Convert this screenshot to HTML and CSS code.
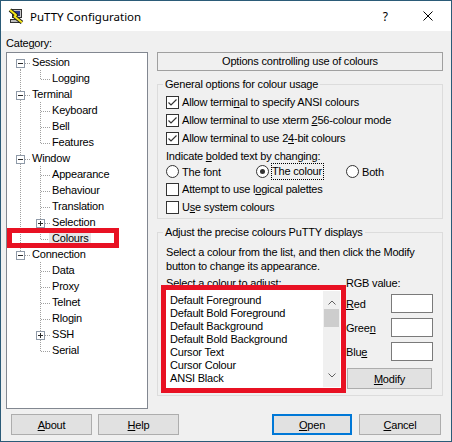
FILE: index.html
```html
<!DOCTYPE html>
<html>
<head>
<meta charset="utf-8">
<title>PuTTY Configuration</title>
<link rel="stylesheet" href="styles.css">
</head>
<body>
<div class="window">
  <div class="titlebar">
    <svg class="app-icon" viewBox="0 0 16 16" width="16" height="16">
      <rect x="4.5" y="1.5" width="9" height="8" fill="#c8c8c8" stroke="#333"/>
      <rect x="6" y="3" width="6" height="5" fill="#2c3a8c"/>
      <rect x="2.5" y="11.5" width="10" height="3" fill="#bdbdbd" stroke="#333"/>
      <polyline points="2,2 8,7 6.5,8.5 14,14.5" fill="none" stroke="#222" stroke-width="4" stroke-linejoin="round"/>
      <polyline points="2,2 8,7 6.5,8.5 14,14.5" fill="none" stroke="#f5e61a" stroke-width="2" stroke-linejoin="round"/>
    </svg>
    <span class="title">PuTTY Configuration</span>
    <span class="help">?</span>
    <svg class="close" viewBox="0 0 10 10" width="10" height="10">
      <path d="M0.5 0.5 L9.5 9.5 M9.5 0.5 L0.5 9.5" stroke="#000" stroke-width="1" fill="none"/>
    </svg>
  </div>

  <div class="main">
    <div class="left">
      <div class="cat">Cate<u>g</u>ory:</div>
      <div class="tree">
        <div class="row"><span class="c1 first"><span class="exp"></span></span><span class="txt">Session</span></div>
        <div class="row"><span class="c1 thru"></span><span class="c2 last"></span><span class="txt">Logging</span></div>
        <div class="row"><span class="c1 tee"><span class="exp"></span></span><span class="txt">Terminal</span></div>
        <div class="row"><span class="c1 thru"></span><span class="c2 tee"></span><span class="txt">Keyboard</span></div>
        <div class="row"><span class="c1 thru"></span><span class="c2 tee"></span><span class="txt">Bell</span></div>
        <div class="row"><span class="c1 thru"></span><span class="c2 last"></span><span class="txt">Features</span></div>
        <div class="row"><span class="c1 tee"><span class="exp"></span></span><span class="txt">Window</span></div>
        <div class="row"><span class="c1 thru"></span><span class="c2 tee"></span><span class="txt">Appearance</span></div>
        <div class="row"><span class="c1 thru"></span><span class="c2 tee"></span><span class="txt">Behaviour</span></div>
        <div class="row"><span class="c1 thru"></span><span class="c2 tee"></span><span class="txt">Translation</span></div>
        <div class="row"><span class="c1 thru"></span><span class="c2 tee"><span class="exp plus"></span></span><span class="txt">Selection</span></div>
        <div class="row"><span class="c1 thru"></span><span class="c2 last"></span><span class="txt sel">Colours</span></div>
        <div class="row"><span class="c1 last"><span class="exp"></span></span><span class="txt">Connection</span></div>
        <div class="row"><span class="c1"></span><span class="c2 tee"></span><span class="txt">Data</span></div>
        <div class="row"><span class="c1"></span><span class="c2 tee"></span><span class="txt">Proxy</span></div>
        <div class="row"><span class="c1"></span><span class="c2 tee"></span><span class="txt">Telnet</span></div>
        <div class="row"><span class="c1"></span><span class="c2 tee"></span><span class="txt">Rlogin</span></div>
        <div class="row"><span class="c1"></span><span class="c2 tee"><span class="exp plus"></span></span><span class="txt">SSH</span></div>
        <div class="row"><span class="c1"></span><span class="c2 last"></span><span class="txt">Serial</span></div>
        <div class="mark"></div>
      </div>
    </div>

    <div class="right">
      <div class="hdr">Options controlling use of colours</div>

      <fieldset class="group g1">
        <legend>General options for colour usage</legend>
        <div class="check"><span class="cb"><svg viewBox="0 0 11 11" width="11" height="11"><polyline points="1.5,5.5 4,8 9.5,2.5" fill="none" stroke="#333" stroke-width="1.2"/></svg></span><span>Allow termi<u>n</u>al to specify ANSI colours</span></div>
        <div class="check"><span class="cb"><svg viewBox="0 0 11 11" width="11" height="11"><polyline points="1.5,5.5 4,8 9.5,2.5" fill="none" stroke="#333" stroke-width="1.2"/></svg></span><span>Allow terminal to use xterm <u>2</u>56-colour mode</span></div>
        <div class="check"><span class="cb"><svg viewBox="0 0 11 11" width="11" height="11"><polyline points="1.5,5.5 4,8 9.5,2.5" fill="none" stroke="#333" stroke-width="1.2"/></svg></span><span>Allow terminal to use 2<u>4</u>-bit colours</span></div>
        <div class="lbl">Indicate <u>b</u>olded text by changing:</div>
        <div class="radios">
          <div class="radio"><span class="rb"></span><span>The font</span></div>
          <div class="radio"><span class="rb on"></span><span class="focus">The colour</span></div>
          <div class="radio"><span class="rb"></span><span>Both</span></div>
        </div>
        <div class="check"><span class="cb"></span><span>Attempt to use l<u>o</u>gical palettes</span></div>
        <div class="check"><span class="cb"></span><span>U<u>s</u>e system colours</span></div>
      </fieldset>

      <fieldset class="group g2">
        <legend>Adjust the precise colours PuTTY displays</legend>
        <p class="desc">Select a colour from the list, and then click the Modify<br>button to change its appearance.</p>
        <div class="adjust">
          <div class="listcol">
            <div class="lbl2">Select a colour to adjust:</div>
            <div class="listbox">
              <ul class="items">
                <li>Default Foreground</li>
                <li>Default Bold Foreground</li>
                <li>Default Background</li>
                <li>Default Bold Background</li>
                <li>Cursor Text</li>
                <li>Cursor Colour</li>
                <li>ANSI Black</li>
              </ul>
              <div class="scrollbar">
                <div class="sb-btn up"><svg viewBox="0 0 8 5" width="8" height="5"><polyline points="0.5,4.5 4,1 7.5,4.5" fill="none" stroke="#606060" stroke-width="1"/></svg></div>
                <div class="thumb"></div>
                <div class="track"></div>
                <div class="sb-btn down"><svg viewBox="0 0 8 5" width="8" height="5"><polyline points="0.5,0.5 4,4 7.5,0.5" fill="none" stroke="#606060" stroke-width="1"/></svg></div>
              </div>
            </div>
          </div>
          <div class="rgb">
            <div class="lbl2">RGB value:</div>
            <div class="rgb-row first"><span><u>R</u>ed</span><span class="tb"></span></div>
            <div class="rgb-row"><span>Gree<u>n</u></span><span class="tb"></span></div>
            <div class="rgb-row"><span>Blu<u>e</u></span><span class="tb"></span></div>
            <div class="btn modify"><span><u>M</u>odify</span></div>
          </div>
        </div>
      </fieldset>
    </div>
  </div>

  <div class="buttons">
    <div class="btn about"><span><u>A</u>bout</span></div>
    <div class="btn helpb"><span><u>H</u>elp</span></div>
    <div class="btn open"><span><u>O</u>pen</span></div>
    <div class="btn cancel"><span><u>C</u>ancel</span></div>
  </div>
</div>
</body>
</html>
```

FILE: styles.css
```css
* { box-sizing: border-box; }
html, body { margin: 0; padding: 0; background: #fff; }

.window {
  width: 452px;
  height: 442px;
  border: 1px solid #2b5b78;
  background: #f0f0f0;
  display: flex;
  flex-direction: column;
  font-family: "Liberation Sans", Arial, sans-serif;
  font-size: 11px;
  letter-spacing: -0.2px;
  color: #000;
  overflow: hidden;
}

/* title bar */
.titlebar {
  height: 30px;
  flex: none;
  background: #fff;
  display: flex;
  align-items: center;
  padding-left: 7px;
}
.app-icon { flex: none; }
.title {
  margin-left: 6px;
  font-family: "Noto Sans", sans-serif;
  font-size: 11.5px;
  letter-spacing: 0;
}
.help {
  margin-left: auto;
  font-family: "Noto Sans", sans-serif;
  font-size: 12px;
  letter-spacing: 0;
}
.close { margin-left: 35px; margin-right: 18px; flex: none; }

/* main area */
.main {
  display: flex;
  align-items: flex-start;
  padding-left: 5px;
  height: 378px;
  flex: none;
}
.left { width: 142px; flex: none; }
.cat { margin-top: 6px; height: 15px; line-height: 13px; }

.tree {
  --v: repeating-linear-gradient(to bottom, #a0a0a0 0 1px, transparent 1px 2px);
  --h: repeating-linear-gradient(to right, #a0a0a0 0 1px, transparent 1px 2px);
  position: relative;
  height: 357px;
  border: 1px solid #828790;
  background: #fff;
  padding-top: 1px;
}
.row { display: flex; align-items: center; height: 16px; }
.c1, .c2 { flex: none; height: 16px; background-repeat: no-repeat; align-self: flex-start; }
.c1 { width: 24px; }
.c2 { width: 20px; }
.c1.thru { background-image: var(--v); background-position: 13px 0; background-size: 1px 16px; }
.c1.tee { background-image: var(--v), var(--h); background-position: 13px 0, 14px 9px; background-size: 1px 16px, 10px 1px; }
.c1.first { background-image: var(--v), var(--h); background-position: 13px 9px, 14px 9px; background-size: 1px 7px, 10px 1px; }
.c1.last { background-image: var(--v), var(--h); background-position: 13px 0, 14px 9px; background-size: 1px 9px, 10px 1px; }
.c2.tee { background-image: var(--v), var(--h); background-position: 9px 0, 10px 9px; background-size: 1px 16px, 10px 1px; }
.c2.last { background-image: var(--v), var(--h); background-position: 9px 0, 10px 9px; background-size: 1px 9px, 10px 1px; }

.exp {
  display: block;
  position: relative;
  width: 9px;
  height: 9px;
  margin: 5px 0 0 9px;
  border: 1px solid #8f9aa8;
  background: #fff;
}
.c2 .exp { margin-left: 5px; }
.exp::before {
  content: "";
  position: absolute;
  left: 1px; top: 3px;
  width: 5px; height: 1px;
  background: #2a2a2a;
}
.exp.plus::after {
  content: "";
  position: absolute;
  left: 3px; top: 1px;
  width: 1px; height: 5px;
  background: #2a2a2a;
}
.txt { line-height: 16px; padding-left: 1px; white-space: nowrap; }
.txt.sel {
  line-height: 14px;
  background: #e6e6e6;
  margin-left: -2px;
  padding: 0 2px 0 3px;
}
.mark {
  position: absolute;
  left: 0;
  top: 175px;
  width: 112px;
  height: 20px;
  border: 5px solid #e81123;
}

/* right panel */
.right { width: 286px; flex: none; margin-left: 9px; margin-top: 21px; }
.hdr {
  height: 19px;
  border: 1px solid #a0a0a0;
  text-align: center;
  line-height: 17px;
}
.group {
  margin: 0;
  border: 1px solid #dcdcdc;
  min-width: 0;
}
.group legend {
  padding: 0 2px;
  margin-left: -3px;
  line-height: 13px;
}
.g1 { margin-top: 7px; padding: 2px 8px 2px 8px; }
.g2 { margin-top: 7px; padding: 6px 8px 6px 8px; }

.check { display: flex; align-items: center; height: 18px; }
.cb {
  flex: none;
  width: 13px;
  height: 13px;
  border: 1px solid #333;
  background: #fff;
  margin-right: 3px;
  display: flex;
}
.lbl { margin-top: 2px; line-height: 14px; height: 14px; }
.radios {
  display: grid;
  grid-template-columns: 90px 90px 90px;
  height: 17px;
}
.radio { display: flex; align-items: center; }
.rb {
  position: relative;
  flex: none;
  width: 13px;
  height: 13px;
  border: 1px solid #333;
  border-radius: 50%;
  background: #fff;
  margin-right: 3px;
}
.rb.on::after {
  content: "";
  position: absolute;
  left: 3px; top: 3px;
  width: 5px; height: 5px;
  border-radius: 50%;
  background: #333;
}
.focus {
  align-self: stretch;
  margin-left: -1px;
  border: 1px dotted #000;
  line-height: 15px;
  padding-right: 1px;
}

.desc { margin: 0; line-height: 14px; }
.adjust { display: flex; margin-top: 3px; }
.listcol { width: 175px; flex: none; }
.lbl2 { line-height: 14px; height: 14px; white-space: nowrap; }
.listbox {
  width: 175px;
  height: 98px;
  background: #fff;
  outline: 5px solid #e81123;
  display: flex;
  padding: 1px;
}
.items {
  flex: 1;
  list-style: none;
  margin: 0;
  padding: 3px 0 0 3px;
  line-height: 13px;
  white-space: nowrap;
  overflow: hidden;
}
.scrollbar {
  width: 17px;
  flex: none;
  background: #f0f0f0;
  display: flex;
  flex-direction: column;
}
.sb-btn { height: 17px; flex: none; display: flex; justify-content: center; }
.sb-btn.up { padding-top: 9px; }
.sb-btn.down { padding-top: 3px; }
.sb-btn svg { display: block; }
.thumb { height: 18px; margin: 1px 1px 0; background: #cdcdcd; flex: none; }
.track { flex: 1; }

.rgb { width: 87px; margin-left: 5px; flex: none; }
.rgb-row {
  display: flex;
  justify-content: space-between;
  align-items: center;
  height: 19px;
  margin-top: 5px;
}
.rgb-row.first { margin-top: 4px; }
.tb { width: 42px; height: 19px; border: 1px solid #7a7a7a; background: #fff; }

.btn {
  display: flex;
  align-items: center;
  justify-content: center;
  height: 21px;
  border: 1px solid #adadad;
  background: #e1e1e1;
  flex: none;
}
.modify { margin-top: 7px; margin-left: 1px; width: 85px; }

/* bottom buttons */
.buttons { display: flex; padding: 5px 0 0 10px; }
.about { width: 81px; }
.helpb { width: 81px; margin-left: 6px; }
.open { width: 80px; margin-left: 93px; border: 2px solid #0078d7; }
.cancel { width: 82px; margin-left: 7px; }
```
